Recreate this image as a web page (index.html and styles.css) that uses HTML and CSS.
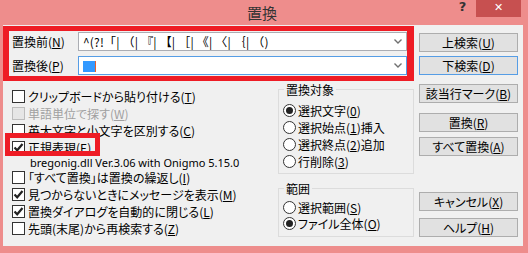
FILE: index.html
```html
<!DOCTYPE html>
<html lang="ja">
<head>
    <meta charset="UTF-8">
    <title>置換</title>
    <link rel="stylesheet" href="styles.css">
</head>
<body>
    <div class="window">
        <div class="titlebar">
            <span class="title">置換</span>
            <span class="help">?</span>
            <span class="close">&#x2715;</span>
        </div>
        <div class="client">
            <div class="main">
                <div class="fields">
                    <div class="field-row">
                        <label class="field-label">置換前(<u>N</u>)</label>
                        <div class="combo">
                            <span class="combo-text pattern">^(?!「| （| 『| 【| ［| 《| 〈| ｛| （)</span>
                            <svg class="arrow" width="8" height="5" viewBox="0 0 8 5"><path d="M0.5 0.5 L4 4 L7.5 0.5" fill="none" stroke="#707070" stroke-width="1.4"/></svg>
                        </div>
                    </div>
                    <div class="field-row">
                        <label class="field-label">置換後(<u>P</u>)</label>
                        <div class="combo focused">
                            <span class="combo-text"><span class="selection"></span></span>
                            <svg class="arrow" width="8" height="5" viewBox="0 0 8 5"><path d="M0.5 0.5 L4 4 L7.5 0.5" fill="none" stroke="#707070" stroke-width="1.4"/></svg>
                        </div>
                    </div>
                </div>

                <div class="lower">
                    <ul class="options">
                        <li class="option"><span class="check"></span>クリップボードから貼り付ける(<u>T</u>)</li>
                        <li class="option disabled"><span class="check"></span>単語単位で探す(<u>W</u>)</li>
                        <li class="option"><span class="check"></span>英大文字と小文字を区別する(<u>C</u>)</li>
                        <li class="option marked"><span class="check checked"><svg width="11" height="11" viewBox="0 0 11 11"><path d="M1.5 5.5 L4.2 8.3 L9.5 2" fill="none" stroke="#222" stroke-width="2.2"/></svg></span>正規表現(<u>E</u>)</li>
                        <li class="note">bregonig.dll Ver.3.06 with Onigmo 5.15.0</li>
                        <li class="option"><span class="check"></span>「すべて置換」は置換の繰返し(<u>I</u>)</li>
                        <li class="option"><span class="check checked"><svg width="11" height="11" viewBox="0 0 11 11"><path d="M1.5 5.5 L4.2 8.3 L9.5 2" fill="none" stroke="#222" stroke-width="2.2"/></svg></span>見つからないときにメッセージを表示(<u>M</u>)</li>
                        <li class="option"><span class="check checked"><svg width="11" height="11" viewBox="0 0 11 11"><path d="M1.5 5.5 L4.2 8.3 L9.5 2" fill="none" stroke="#222" stroke-width="2.2"/></svg></span>置換ダイアログを自動的に閉じる(<u>L</u>)</li>
                        <li class="option"><span class="check"></span>先頭(末尾)から再検索する(<u>Z</u>)</li>
                    </ul>

                    <div class="groups">
                        <div class="group target">
                            <span class="legend">置換対象</span>
                            <div class="radio-row"><span class="radio on"></span>選択文字(<u>0</u>)</div>
                            <div class="radio-row"><span class="radio"></span>選択始点(<u>1</u>)挿入</div>
                            <div class="radio-row"><span class="radio"></span>選択終点(<u>2</u>)追加</div>
                            <div class="radio-row"><span class="radio"></span>行削除(<u>3</u>)</div>
                        </div>
                        <div class="group range">
                            <span class="legend">範囲</span>
                            <div class="radio-row"><span class="radio"></span>選択範囲(<u>S</u>)</div>
                            <div class="radio-row"><span class="radio on"></span>ファイル全体(<u>O</u>)</div>
                        </div>
                    </div>
                </div>
            </div>

            <div class="buttons">
                <button class="btn b-up">上検索(<u>U</u>)</button>
                <button class="btn b-down focused">下検索(<u>D</u>)</button>
                <button class="btn b-mark">該当行マーク(<u>B</u>)</button>
                <button class="btn b-replace">置換(<u>R</u>)</button>
                <button class="btn b-all">すべて置換(<u>A</u>)</button>
                <button class="btn b-cancel">キャンセル(<u>X</u>)</button>
                <button class="btn b-help">ヘルプ(<u>H</u>)</button>
            </div>
        </div>
    </div>
</body>
</html>
```

FILE: styles.css
```css
body {
    margin: 0;
    padding: 0;
    background: #ee8d8c;
    font-family: "Noto Sans CJK JP", "Noto Sans", sans-serif;
    font-size: 12px;
    font-feature-settings: "palt";
    color: #000;
    overflow: hidden;
}

.window {
    width: 528px;
    height: 253px;
}

/* title bar */
.titlebar {
    display: flex;
    height: 25px;
}
.title {
    flex: 1;
    padding-left: 69px;
    text-align: center;
    font-size: 15px;
    line-height: 25px;
    color: #333;
}
.help {
    width: 15px;
    margin-right: 6px;
    font-family: "DejaVu Sans", sans-serif;
    font-weight: bold;
    font-size: 13px;
    line-height: 14px;
    color: #333;
    text-align: center;
}
.close {
    width: 45px;
    height: 17px;
    margin-right: 7px;
    background: #c75050;
    color: #fff;
    font-family: "DejaVu Sans", sans-serif;
    font-size: 11px;
    font-weight: bold;
    line-height: 16px;
    text-align: center;
}

/* client area */
.client {
    display: flex;
    margin-left: 3px;
    width: 515px;
    height: 220px;
    padding: 1px 5px 0 0;
    background: #f0f0f0;
}
.main {
    width: 411px;
}

.fields {
    height: 44px;
    border-style: solid;
    border-color: #ee1c25;
    border-width: 5px 7px 5px 6px;
    padding-top: 1px;
    box-sizing: content-box;
}
.field-row {
    display: flex;
    height: 19px;
    margin-bottom: 5px;
}
.field-label {
    width: 66px;
    padding-left: 3px;
    line-height: 19px;
}
.combo {
    flex: 1;
    display: flex;
    align-items: center;
    background: #fff;
    border: 1px solid #abadb3;
    box-sizing: border-box;
}
.combo.focused {
    border-color: #569de5;
}
.combo-text {
    flex: 1;
    padding-left: 4px;
    line-height: 17px;
    white-space: pre;
    overflow: hidden;
}
.combo-text.pattern {
    font-feature-settings: normal;
    letter-spacing: 0.2px;
}
.selection {
    display: inline-block;
    width: 12px;
    height: 11px;
    vertical-align: -1px;
    background: #3399ff;
    border-right: 1px solid #e8602c;
}
.arrow {
    margin-right: 4px;
}

/* lower part */
.lower {
    display: flex;
}
.options {
    list-style: none;
    margin: 7px 0 0 0;
    padding: 0 0 0 9px;
    width: 265px;
}
.option {
    position: relative;
    display: flex;
    align-items: center;
    height: 17px;
    white-space: nowrap;
}
.check {
    width: 13px;
    height: 13px;
    margin-right: 3px;
    border: 1px solid #333;
    background: #fff;
    box-sizing: border-box;
    display: flex;
    align-items: center;
    justify-content: center;
}
.option.disabled {
    color: #a0a0a0;
}
.option.disabled .check {
    border-color: #bcbcbc;
    background: #e6e6e6;
}
.note {
    height: 13px;
    padding-left: 18px;
    font-family: "Noto Sans", sans-serif;
    font-size: 11px;
    line-height: 13px;
    white-space: nowrap;
}

/* red annotation over the regex option */
.option.marked::after {
    content: "";
    position: absolute;
    left: -7px;
    top: -6px;
    width: 95px;
    height: 23px;
    border: 5px solid #ee1c25;
    box-sizing: border-box;
}

.groups {
    width: 136px;
    margin-left: 1px;
}
.group {
    position: relative;
    border: 1px solid #dcdcdc;
    box-sizing: border-box;
    padding-left: 4px;
}
.group.target {
    margin-top: 8px;
    height: 85px;
    padding-top: 12px;
}
.group.range {
    margin-top: 14px;
    height: 49px;
    padding-top: 10px;
}
.legend {
    position: absolute;
    top: -8px;
    left: 5px;
    padding: 0 2px;
    background: #f0f0f0;
    line-height: 15px;
}
.radio-row {
    display: flex;
    align-items: center;
    height: 17px;
    white-space: nowrap;
}
.group.range .radio-row {
    height: 16px;
}
.radio {
    width: 13px;
    height: 13px;
    margin-right: 2px;
    border: 1px solid #333;
    border-radius: 50%;
    background: #fff;
    box-sizing: border-box;
    display: flex;
    align-items: center;
    justify-content: center;
}
.radio.on::after {
    content: "";
    width: 7px;
    height: 7px;
    border-radius: 50%;
    background: #222;
}

/* buttons */
.buttons {
    display: flex;
    flex-direction: column;
    margin-left: 5px;
    width: 99px;
}
.btn {
    height: 19px;
    padding: 0;
    background: #e1e1e1;
    border: 1px solid #adadad;
    font-family: inherit;
    font-size: 12px;
    font-feature-settings: "palt";
    color: #000;
    line-height: 16px;
}
.btn.focused {
    border-color: #569de5;
}
.b-up { margin-top: 7px; }
.b-down { margin-top: 4px; }
.b-mark { margin-top: 9px; }
.b-replace { margin-top: 10px; }
.b-all { margin-top: 5px; }
.b-cancel { margin-top: 36px; }
.b-help { margin-top: 7px; }
```
